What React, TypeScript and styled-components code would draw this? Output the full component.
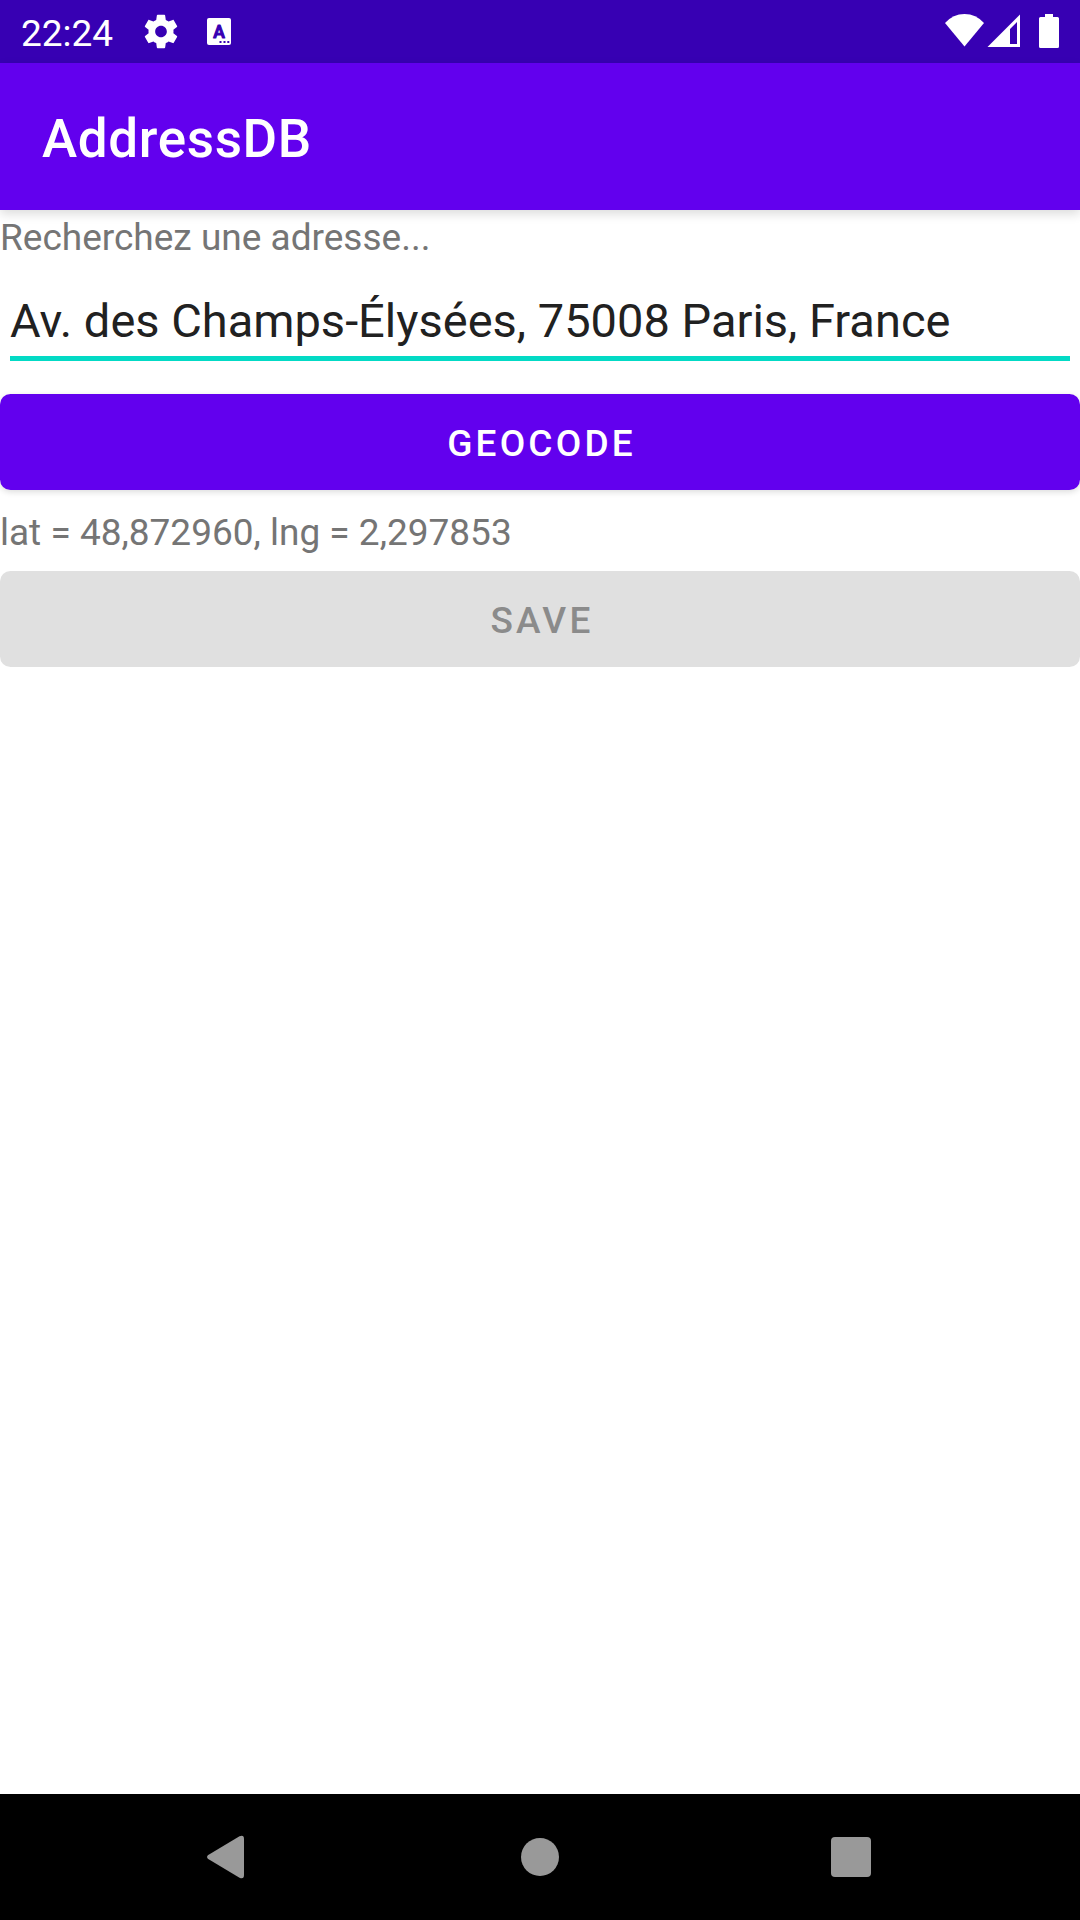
import React from 'react';
import styled, { createGlobalStyle } from 'styled-components';

const GlobalStyle = createGlobalStyle`
  * { box-sizing: border-box; }
  body { margin: 0; background: #fff; }
`;

const Screen = styled.div`
  display: flex;
  flex-direction: column;
  width: 1080px;
  height: 1920px;
  overflow: hidden;
  background: #fff;
  font-family: Roboto, 'Liberation Sans', sans-serif;
`;

const StatusBar = styled.header`
  display: flex;
  align-items: flex-start;
  flex: none;
  height: 63px;
  padding: 0 20px 0 21px;
  background: #3700b3;
  color: #fff;
`;

const Clock = styled.span`
  width: 120px;
  padding-top: 9px;
  font-size: 37px;
  line-height: 50px;
`;

const Notifications = styled.div`
  display: flex;
  gap: 26px;
  padding-top: 11px;
`;

const SystemIcons = styled.div`
  display: flex;
  margin-left: auto;
  padding-top: 11px;
`;

const AppBar = styled.div`
  display: flex;
  flex: none;
  height: 147px;
  padding: 45px 42px 0;
  background: #6200ee;
  box-shadow: 0 4px 10px rgba(0, 0, 0, 0.14);
`;

const Title = styled.h1`
  margin: 0;
  color: #fff;
  font-size: 53px;
  font-weight: 500;
  letter-spacing: 0.65px;
  line-height: 62px;
`;

const Form = styled.main`
  display: flex;
  flex: 1;
  flex-direction: column;
`;

const Label = styled.p<{ $height: number; $top: number }>`
  flex: none;
  height: ${({ $height }) => $height}px;
  margin: 0;
  padding-top: ${({ $top }) => $top}px;
  color: #757575;
  font-size: 37px;
  line-height: 44px;
`;

const AddressField = styled.div`
  flex: none;
  height: 101px;
  margin: 0 10px 33px;
  padding-top: 33px;
  border-bottom: 5px solid #03dac5;
  color: #212121;
  font-size: 47px;
  line-height: 56px;
`;

const Button = styled.button`
  flex: none;
  height: 96px;
  padding: 4px 0 0 3px;
  border: 0;
  border-radius: 10.5px;
  background: #6200ee;
  box-shadow: 0 2px 6px rgba(0, 0, 0, 0.14);
  color: #fff;
  font: 500 37px/44px Roboto, 'Liberation Sans', sans-serif;
  letter-spacing: 3.2px;
  text-transform: uppercase;

  &:disabled {
    padding-left: 4px;
    background: #e0e0e0;
    box-shadow: none;
    color: #8b8b8b;
  }
`;

const NavBar = styled.nav`
  display: flex;
  align-items: center;
  justify-content: center;
  flex: none;
  gap: 231px;
  height: 126px;
  background: #000;
`;

const NavIcon = styled.svg`
  width: 80px;
  height: 80px;
  fill: #999;
`;

const GearIcon = () => (
  <svg width="40" height="40" viewBox="0 -0.3 24 24" fill="#fff">
    <path d="M19.43 12.98c.04-.32.07-.64.07-.98s-.03-.66-.07-.98l2.11-1.65c.19-.15.24-.42.12-.64l-2-3.46c-.12-.22-.39-.3-.61-.22l-2.49 1c-.52-.4-1.08-.73-1.69-.98l-.38-2.65C14.46 2.18 14.25 2 14 2h-4c-.25 0-.46.18-.49.42l-.38 2.65c-.61.25-1.17.59-1.69.98l-2.49-1c-.23-.09-.49 0-.61.22l-2 3.46c-.13.22-.07.49.12.64l2.11 1.65c-.04.32-.07.65-.07.98s.03.66.07.98l-2.11 1.65c-.19.15-.24.42-.12.64l2 3.46c.12.22.39.3.61.22l2.49-1c.52.4 1.08.73 1.69.98l.38 2.65c.03.24.24.42.49.42h4c.25 0 .46-.18.49-.42l.38-2.65c.61-.25 1.17-.59 1.69-.98l2.49 1c.23.09.49 0 .61-.22l2-3.46c.12-.22.07-.49-.12-.64l-2.11-1.65zM12 15.5c-1.93 0-3.5-1.57-3.5-3.5s1.57-3.5 3.5-3.5 3.5 1.57 3.5 3.5-1.57 3.5-3.5 3.5z" />
  </svg>
);

const KeyboardIcon = () => (
  <svg width="24" height="40" viewBox="0 0 24 40">
    <rect x="0" y="7" width="24" height="27" rx="2" fill="#fff" />
    <text
      x="12"
      y="26.5"
      textAnchor="middle"
      fontFamily="Roboto"
      fontWeight="500"
      fontSize="17.5"
      fill="#3700b3"
      stroke="#3700b3"
      strokeWidth="1.1"
      strokeLinejoin="round"
    >
      A
    </text>
    <path d="M12.5 30h2v2h-2zM16.5 30h2v2h-2zM20.3 30h2v2h-2z" fill="#3700b3" />
  </svg>
);

const StatusGlyphs = () => (
  <svg width="120" height="40" viewBox="940 11 120 40" fill="#fff">
    <path d="M964.5 46.5 945 23q8-9 19.500-9t19.500 9z" />
    <path fillRule="evenodd" d="M1020 14.500V47H987.500zM1017 22l-7 7v15h7z" />
    <path d="M1045 14h8v3h4.500q1.500 0 1.500 1.500v28q0 1.500-1.500 1.500h-17q-1.500 0-1.500-1.500v-28q0-1.500 1.500-1.500h4.500z" />
  </svg>
);

export default function App() {
  return (
    <>
      <GlobalStyle />
      <Screen>
        <StatusBar>
          <Clock>22:24</Clock>
          <Notifications>
            <GearIcon />
            <KeyboardIcon />
          </Notifications>
          <SystemIcons>
            <StatusGlyphs />
          </SystemIcons>
        </StatusBar>
        <AppBar>
          <Title>AddressDB</Title>
        </AppBar>
        <Form>
          <Label $height={50} $top={6}>Recherchez une adresse...</Label>
          <AddressField>Av. des Champs-Élysées, 75008 Paris, France</AddressField>
          <Button>Geocode</Button>
          <Label $height={81} $top={21}>lat = 48,872960, lng = 2,297853</Label>
          <Button disabled>Save</Button>
        </Form>
        <NavBar>
          <NavIcon viewBox="189 1817 80 80">
            <path d="M207.800 1855.300 239.500 1836.300Q244 1834.500 244 1839V1875Q244 1879.500 239.500 1877.700L207.800 1858.700Q206 1857 207.800 1855.300z" />
          </NavIcon>
          <NavIcon viewBox="500 1817 80 80">
            <circle cx="540" cy="1857" r="19" />
          </NavIcon>
          <NavIcon viewBox="811 1817 80 80">
            <rect x="831" y="1837" width="40" height="40" rx="4" />
          </NavIcon>
        </NavBar>
      </Screen>
    </>
  );
}
